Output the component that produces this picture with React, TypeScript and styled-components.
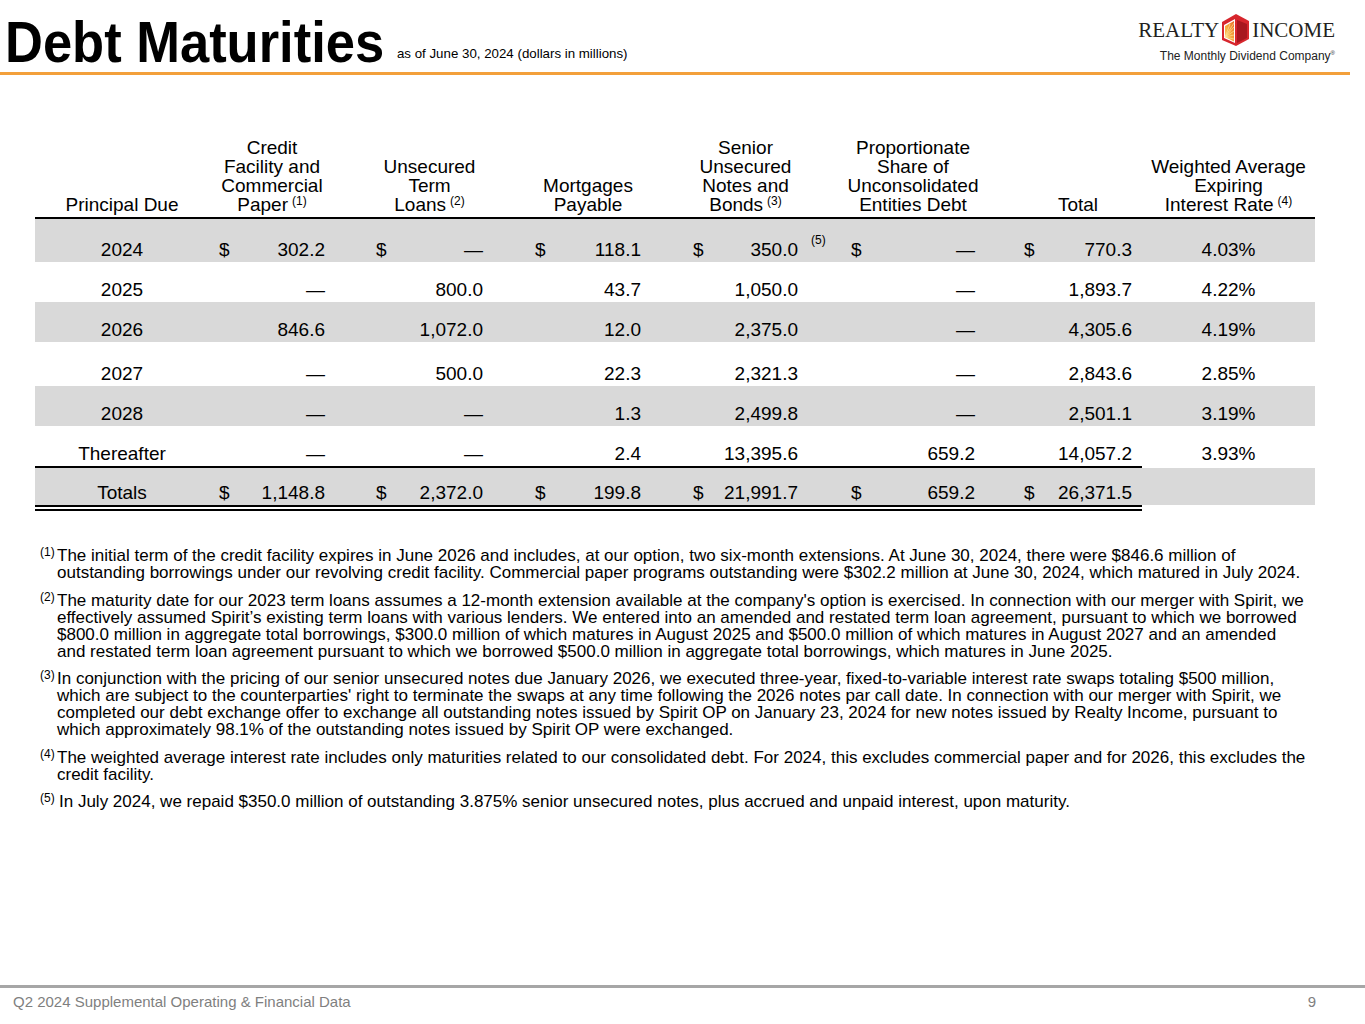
import React from "react";
import styled, { createGlobalStyle } from "styled-components";

const GlobalStyle = createGlobalStyle`
  html, body {
    margin: 0;
    padding: 0;
    background: #fff;
  }
  body {
    font-family: "Liberation Sans", Arial, sans-serif;
    color: #000;
  }
`;

const COLS = "174px 126px 158px 158px 157px 177px 157px 173px";
const LEADS = [0, 31, 32, 32, 33, 29];

type Rule = "none" | "single" | "double";
const RULE_W: Record<Rule, number> = { none: 0, single: 2, double: 6 };

const Page = styled.div`
  width: 1365px;
  height: 1024px;
  display: flex;
  flex-direction: column;
  overflow: hidden;
`;

const Header = styled.header`
  display: flex;
  justify-content: space-between;
  align-items: flex-start;
  height: 72px;
  margin-right: 15px;
  padding: 0 15px 0 5px;
  border-bottom: 3px solid #f3a03b;
`;

const TitleRow = styled.h1`
  margin: 14px 0 0;
  font-size: 58px;
  line-height: 56px;
  font-weight: bold;
  white-space: nowrap;
`;

/* no condensed face is installed, so the bold sans is narrowed */
const TitleText = styled.span`
  display: inline-block;
  transform: scaleX(0.905);
  transform-origin: left bottom;
  margin-right: -40px;
`;

const Subtitle = styled.span`
  margin-left: 13px;
  font-size: 13.3px;
  font-weight: normal;
  vertical-align: 4px;
`;

const Logo = styled.div`
  display: flex;
  flex-direction: column;
  align-items: center;
  margin-top: 14px;
`;

const Brand = styled.div`
  display: flex;
  align-items: center;
  gap: 3px;
  font-family: "Liberation Serif", serif;
  font-size: 21px;
  line-height: 24px;
  color: #231f20;
`;

const Tagline = styled.div`
  align-self: flex-end;
  margin-top: 1px;
  font-size: 12px;
  line-height: 13px;
  color: #222;

  sup {
    font-size: 6px;
  }
`;

const Table = styled.section`
  margin: 63px 0 0 35px;
  width: 1280px;
`;

const HeadRow = styled.div`
  display: grid;
  grid-template-columns: ${COLS};
  border-bottom: 2px solid #000;
`;

const HeadCell = styled.div<{ $lead: number }>`
  display: flex;
  flex-direction: column;
  justify-content: flex-end;
  align-items: center;
  padding: 0 0 3px ${(p) => p.$lead}px;
  font-size: 19px;
  line-height: 19px;
  text-align: center;
  white-space: nowrap;
`;

const Sup = styled.sup`
  margin-left: 4px;
  font-size: 12px;
  line-height: 0;
  vertical-align: 6px;
`;

const Row = styled.div`
  display: grid;
  grid-template-columns: ${COLS};
`;

const Cell = styled.div<{
  $h: number;
  $shade: boolean;
  $rule: Rule;
  $money?: boolean;
  $lead?: number;
  $clear?: boolean;
}>`
  box-sizing: border-box;
  height: ${(p) => p.$h + RULE_W[p.$rule]}px;
  display: flex;
  align-items: flex-end;
  justify-content: ${(p) => (p.$money ? "space-between" : "center")};
  padding: 0 ${(p) => (p.$money ? 10 : 0)}px 3px
    ${(p) => (p.$money ? (p.$lead ?? 0) + 10 : 0)}px;
  font-size: 19px;
  line-height: 19px;
  white-space: nowrap;
  background: ${(p) => (p.$shade ? "#d9d9d9" : "transparent")};
  background-clip: padding-box;
  border-bottom: ${(p) =>
    p.$rule === "none"
      ? "none"
      : `${RULE_W[p.$rule]}px ${p.$rule === "double" ? "double" : "solid"} ${
          p.$clear ? "transparent" : "#000"
        }`};
`;

const Val = styled.span`
  position: relative;
  margin-left: auto;
`;

const Marker = styled.span`
  position: absolute;
  left: calc(100% + 13px);
  top: -6px;
  font-size: 12px;
  line-height: 12px;
`;

const Notes = styled.section`
  display: flex;
  flex-direction: column;
  gap: 10.5px;
  margin: 36px 0 0 40px;
  font-size: 17px;
  line-height: 17px;
`;

const Note = styled.div`
  display: flex;
  align-items: flex-start;
`;

const NoteMark = styled.span<{ $wide?: boolean }>`
  flex: 0 0 ${(p) => (p.$wide ? 19 : 17)}px;
  margin-top: -1px;
  font-size: 12px;
  line-height: 12px;
`;

const NoteText = styled.div`
  white-space: nowrap;

  span {
    display: block;
  }
`;

const Footer = styled.footer`
  box-sizing: border-box;
  margin-top: auto;
  height: 39px;
  display: flex;
  justify-content: space-between;
  padding: 5px 49px 0 13px;
  border-top: 3px solid #a6a6a6;
  font-size: 15px;
  line-height: 17px;
  color: #7f7f7f;
`;

const HouseIcon = () => (
  <svg width="27" height="32" viewBox="0 0 27 32">
    <defs>
      <linearGradient id="sun" x1="0" y1="1" x2="1" y2="0">
        <stop offset="0" stopColor="#fbd15b" />
        <stop offset="0.55" stopColor="#f5a23a" />
        <stop offset="1" stopColor="#ea6a2a" />
      </linearGradient>
    </defs>
    <polygon points="14,0 27,7 27,25 14,32 0,26 0,8" fill="#d7262d" />
    <polygon points="2,11 13,5 13,29 2,24" fill="#fff" />
    <polygon points="3,12 12,7 12,27.5 3,23" fill="url(#sun)" />
    <g stroke="#fde9a6" strokeWidth="0.7" opacity="0.9">
      <line x1="3" y1="23" x2="12" y2="9" />
      <line x1="3" y1="23" x2="12" y2="13" />
      <line x1="3" y1="23" x2="12" y2="17" />
      <line x1="3" y1="23" x2="12" y2="21" />
      <line x1="3" y1="23" x2="8" y2="10" />
      <line x1="3" y1="23" x2="12" y2="25" />
    </g>
    <polygon points="15,6 25,10 25,24 15,29" fill="#a8171f" />
  </svg>
);

type Amount = { v: string; cur?: boolean; note?: string };
type DataRow = {
  label: string;
  h: number;
  shade: boolean;
  rule: Rule;
  cells: Amount[];
  rate: string;
};

const D = "\u2014";
const plain = (...vs: string[]): Amount[] => vs.map((v) => ({ v }));
const withCur = (...vs: string[]): Amount[] => vs.map((v) => ({ v, cur: true }));

const rows: DataRow[] = [
  {
    label: "2024",
    h: 43,
    shade: true,
    rule: "none",
    cells: [
      { v: "302.2", cur: true },
      { v: D, cur: true },
      { v: "118.1", cur: true },
      { v: "350.0", cur: true, note: "(5)" },
      { v: D, cur: true },
      { v: "770.3", cur: true },
    ],
    rate: "4.03%",
  },
  { label: "2025", h: 40, shade: false, rule: "none", cells: plain(D, "800.0", "43.7", "1,050.0", D, "1,893.7"), rate: "4.22%" },
  { label: "2026", h: 40, shade: true, rule: "none", cells: plain("846.6", "1,072.0", "12.0", "2,375.0", D, "4,305.6"), rate: "4.19%" },
  { label: "2027", h: 44, shade: false, rule: "none", cells: plain(D, "500.0", "22.3", "2,321.3", D, "2,843.6"), rate: "2.85%" },
  { label: "2028", h: 40, shade: true, rule: "none", cells: plain(D, D, "1.3", "2,499.8", D, "2,501.1"), rate: "3.19%" },
  { label: "Thereafter", h: 40, shade: false, rule: "single", cells: plain(D, D, "2.4", "13,395.6", "659.2", "14,057.2"), rate: "3.93%" },
  { label: "Totals", h: 37, shade: true, rule: "double", cells: withCur("1,148.8", "2,372.0", "199.8", "21,991.7", "659.2", "26,371.5"), rate: "" },
];

const heads: { lines: string[]; note?: string }[] = [
  { lines: ["Principal Due"] },
  { lines: ["Credit", "Facility and", "Commercial", "Paper"], note: "(1)" },
  { lines: ["Unsecured", "Term", "Loans"], note: "(2)" },
  { lines: ["Mortgages", "Payable"] },
  { lines: ["Senior", "Unsecured", "Notes and", "Bonds"], note: "(3)" },
  { lines: ["Proportionate", "Share of", "Unconsolidated", "Entities Debt"] },
  { lines: ["Total"] },
  { lines: ["Weighted Average", "Expiring", "Interest Rate"], note: "(4)" },
];

const footnotes: { mark: string; lines: string[] }[] = [
  {
    mark: "(1)",
    lines: [
      "The initial term of the credit facility expires in June 2026 and includes, at our option, two six-month extensions. At June 30, 2024, there were $846.6 million of",
      "outstanding borrowings under our revolving credit facility. Commercial paper programs outstanding were $302.2 million at June 30, 2024, which matured in July 2024.",
    ],
  },
  {
    mark: "(2)",
    lines: [
      "The maturity date for our 2023 term loans assumes a 12-month extension available at the company's option is exercised. In connection with our merger with Spirit, we",
      "effectively assumed Spirit\u2019s existing term loans with various lenders. We entered into an amended and restated term loan agreement, pursuant to which we borrowed",
      "$800.0 million in aggregate total borrowings, $300.0 million of which matures in August 2025 and $500.0 million of which matures in August 2027 and an amended",
      "and restated term loan agreement pursuant to which we borrowed $500.0 million in aggregate total borrowings, which matures in June 2025.",
    ],
  },
  {
    mark: "(3)",
    lines: [
      "In conjunction with the pricing of our senior unsecured notes due January 2026, we executed three-year, fixed-to-variable interest rate swaps totaling $500 million,",
      "which are subject to the counterparties' right to terminate the swaps at any time following the 2026 notes par call date. In connection with our merger with Spirit, we",
      "completed our debt exchange offer to exchange all outstanding notes issued by Spirit OP on January 23, 2024 for new notes issued by Realty Income, pursuant to",
      "which approximately 98.1% of the outstanding notes issued by Spirit OP were exchanged.",
    ],
  },
  {
    mark: "(4)",
    lines: [
      "The weighted average interest rate includes only maturities related to our consolidated debt. For 2024, this excludes commercial paper and for 2026, this excludes the",
      "credit facility.",
    ],
  },
  {
    mark: "(5)",
    lines: [
      "In July 2024, we repaid $350.0 million of outstanding 3.875% senior unsecured notes, plus accrued and unpaid interest, upon maturity.",
    ],
  },
];

export default function App() {
  return (
    <Page>
      <GlobalStyle />
      <Header>
        <TitleRow>
          <TitleText>Debt Maturities</TitleText>
          <Subtitle>as of June 30, 2024 (dollars in millions)</Subtitle>
        </TitleRow>
        <Logo>
          <Brand>
            <span>REALTY</span>
            <HouseIcon />
            <span>INCOME</span>
          </Brand>
          <Tagline>
            The Monthly Dividend Company<sup>®</sup>
          </Tagline>
        </Logo>
      </Header>

      <Table>
        <HeadRow>
          {heads.map((h, i) => (
            <HeadCell key={i} $lead={i >= 1 && i <= 6 ? LEADS[i - 1] : 0}>
              {h.lines.map((l, j) => (
                <span key={j}>
                  {l}
                  {h.note && j === h.lines.length - 1 && <Sup>{h.note}</Sup>}
                </span>
              ))}
            </HeadCell>
          ))}
        </HeadRow>
        {rows.map((r) => (
          <Row key={r.label}>
            <Cell $h={r.h} $shade={r.shade} $rule={r.rule}>
              {r.label}
            </Cell>
            {r.cells.map((c, i) => (
              <Cell key={i} $h={r.h} $shade={r.shade} $rule={r.rule} $money $lead={LEADS[i]}>
                {c.cur && <span>$</span>}
                <Val>
                  {c.v}
                  {c.note && <Marker>{c.note}</Marker>}
                </Val>
              </Cell>
            ))}
            <Cell $h={r.h} $shade={r.shade} $rule={r.rule} $clear>
              {r.rate}
            </Cell>
          </Row>
        ))}
      </Table>

      <Notes>
        {footnotes.map((n) => (
          <Note key={n.mark}>
            <NoteMark $wide={n.mark === "(5)"}>{n.mark}</NoteMark>
            <NoteText>
              {n.lines.map((l, i) => (
                <span key={i}>{l}</span>
              ))}
            </NoteText>
          </Note>
        ))}
      </Notes>

      <Footer>
        <span>Q2 2024 Supplemental Operating &amp; Financial Data</span>
        <span>9</span>
      </Footer>
    </Page>
  );
}
